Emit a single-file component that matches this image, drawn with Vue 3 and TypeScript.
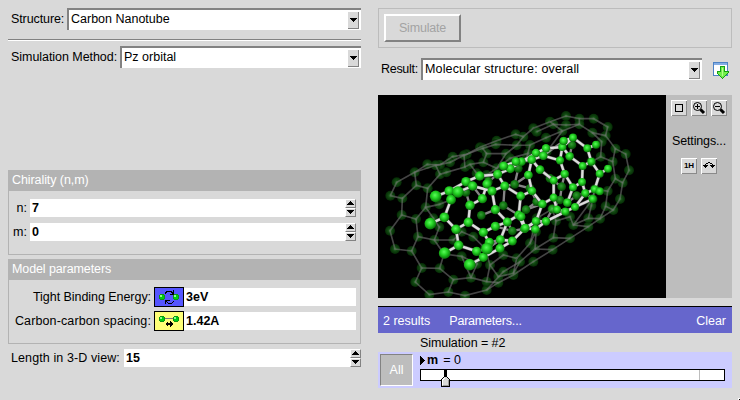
<script setup lang="ts">
import { ref } from 'vue'

type Point = [number, number]

const structure = ref('Carbon Nanotube')
const method = ref('Pz orbital')
const result = ref('Molecular structure: overall')
const chirality = ref([
  { label: 'n:', value: '7' },
  { label: 'm:', value: '0' },
])

// Each chain lists the atoms joined by consecutive bonds.
const outerChains = [
  '61,332 80,292 134,262 172,238 210,240 248,215 290,208 330,187 380,167 437,148 460,155 490,130 540,110 588,93 628,101 671,101 713,126 707,152 736,191 767,207 777,256 758,293 750,342 730,375 690,401 655,425 600,460 548,494 490,530 430,570 385,593 350,615 285,632 235,621 178,629 136,591 155,549 125,498 75,492 60,437 95,390 97,340 61,332',
  '97,340 139,301 134,262 197,241 240,232 282,211 338,190 377,178 440,181 460,155',
  '139,301 173,310 210,268 229,262 285,246 300,238 340,232 350,206 408,206 440,181 480,180 528,158 577,138 628,118 667,143 707,152',
  '173,310 167,367 138,402 95,390', '138,402 144,455 125,498',
  '144,455 193,465 222,507 209,550 155,549', '209,550 250,584 235,621',
  '193,465 208,426 190,400 167,367 208,358 243,344',
  '222,507 275,514 303,578 250,584', '275,514 321,537 303,578 350,590 385,593',
  '193,465 250,465 275,440 310,455 345,490 360,540 350,590',
  '360,540 400,510 440,520 430,565 385,575 360,540',
  '440,520 480,475 498,440 495,492 450,530 430,565',
  '495,492 550,458 558,408 600,395 610,420 655,400 664,362 674,313 713,318 736,281 758,293',
  '713,318 707,364 730,375', '707,364 690,401 655,400', '736,281 728,230 692,215 695,170 667,143',
  '728,230 736,191', '628,118 628,101', '577,138 540,110', '500,140 550,118 588,120 628,118',
  '350,206 338,190', '285,246 282,211', '210,268 197,241', '340,232 380,250 408,206',
  '480,180 470,220 530,200 577,138', '475,205 420,220 380,250',
  '300,238 320,265 350,270 380,250', '495,492 548,494', '550,458 600,460',
  '610,420 655,425', '450,530 400,560 350,615', '692,215 664,230', '674,313 668,342 610,420',
  '558,408 547,372 500,400 480,475',
]
// The far wall of the inner tube, seen through the near one.
const farChains = [
  '288,322 300,361', '308,303 337,341', '376,374 334,391', '404,303 400,362 446,390',
  '400,362 376,374', '351,297 355,290 383,268', '404,303 434,298 475,270', '434,298 480,310 500,350 468,374 453,395',
  '445,250 438,230', '445,250 434,298', '510,254 540,280 575,305 584,267', '575,305 570,345 547,372 528,409',
  '427,438 412,411', '376,424 427,438 464,431', '468,374 517,357', '581,168 520,212', '606,180 599,214',
  '646,325 620,332 592,353', '668,342 646,325', '358,472 391,464', '320,499 352,491 391,464',
]
const innerChains = [
  '197,334 238,318 288,290 329,273 383,268 421,251 454,230 498,204 528,190 577,186 609,158 652,190 678,179',
  '238,318 243,344 223,397 181,416', '223,397 258,433 266,481 224,504',
  '258,433 295,412 300,361 337,341 351,297', '295,412 340,442 376,424 412,411 446,390 452,333 404,303 366,318 376,374 412,411',
  '264,321 308,303 366,318', '308,303 288,290',
  '266,481 320,499 340,517 299,539', '340,517 390,490 427,468 464,431 446,390',
  '340,442 358,472 351,491', '391,464 427,468', '391,464 412,411', '383,268 404,303',
  '401,243 438,230 485,224 475,270 486,318 517,357 498,409 464,431',
  '452,333 486,318', '485,224 510,254 551,286 551,338 517,357',
  '551,286 584,267 570,226 520,212 485,224', '570,226 577,186 599,214 638,243 664,230 652,190',
  '584,267 609,307 636,291 638,243', '609,307 592,353',
  '551,338 561,374', '636,291 646,325 674,313 689,266 664,230', '689,266 714,251', '646,325 615,366 586,380 561,374',
  '528,409 498,409 466,429 453,395', '496,433 466,429', '496,433 528,409 586,380',
  '581,168 609,158', '674,313 689,319', '668,342 615,366', '421,251 401,243',
]

const parse = (chain: string): Point[] =>
  chain.split(' ').map((pair) => pair.split(',').map(Number) as Point)
const atomsOf = (chains: string[]): Point[] =>
  [...new Set(chains.flatMap((chain) => chain.split(' ')))].map((p) => parse(p)[0])

const outerAtoms = atomsOf(outerChains)
const farAtoms = atomsOf(farChains)
const innerAtoms = atomsOf(innerChains)
const terminals = new Set(['197,334', '181,416', '224,504', '264,321', '299,539', '351,491'])
const innerRadius = (p: Point): number =>
  terminals.has(p.join()) ? 17.5 : Math.max(12, 15 - (p[0] - 180) / 150)
</script>

<template>
  <main class="app">
    <section class="inputs">
      <div class="row">
        <label class="t-structure">Structure:</label>
        <div class="combo"><span class="t-cn">{{ structure }}</span><i class="drop"><svg width="7" height="4"><path d="M0 0h7v1H6v1H5v1H4v1H3V3H2V2H1V1H0z" /></svg></i></div>
      </div>
      <hr />
      <div class="row">
        <label class="t-method">Simulation Method:</label>
        <div class="combo"><span class="t-pz">{{ method }}</span><i class="drop"><svg width="7" height="4"><path d="M0 0h7v1H6v1H5v1H4v1H3V3H2V2H1V1H0z" /></svg></i></div>
      </div>

      <fieldset class="group chirality">
        <header><span class="t-chi">Chirality (n,m)</span></header>
        <div v-for="item in chirality" :key="item.label" class="field">
          <label>{{ item.label }}</label>
          <div class="entry">{{ item.value }}</div>
          <div class="spin">
            <i><svg width="7" height="4"><path d="M3 0h1v1h1v1h1v1h1v1H0V3h1V2h1V1h1z" /></svg></i>
            <i><svg width="7" height="4"><path d="M0 0h7v1H6v1H5v1H4v1H3V3H2V2H1V1H0z" /></svg></i>
          </div>
        </div>
      </fieldset>

      <fieldset class="group model">
        <header><span class="t-model">Model parameters</span></header>
        <div class="field">
          <label class="t-tight">Tight Binding Energy:</label>
          <svg class="thumb" width="30" height="20">
            <rect x=".5" y=".5" width="29" height="19" fill="#55f" stroke="#000" />
            <path d="M11 6.500l2-2h4l2 2M19.500 3v4h-4M11.500 17v-4h4M12 14l2 2h4l2-2" fill="none" stroke="#000" />
            <g class="ball"><circle cx="8" cy="10" r="3" /><circle cx="22" cy="10" r="3" /></g>
            <g fill="#8f8"><circle cx="7" cy="9" r="1" /><circle cx="21" cy="9" r="1" /></g>
          </svg>
          <div class="entry">3eV</div>
        </div>
        <div class="field">
          <label class="t-spacing">Carbon-carbon spacing:</label>
          <svg class="thumb" width="30" height="20">
            <rect x=".5" y=".5" width="29" height="19" fill="#ff7" stroke="#000" />
            <path d="M8 7.5h14" stroke="#777" />
            <path d="M11 13l3-3v2h2v-2l3 3-3 3v-2h-2v2z" />
            <g class="ball"><circle cx="8" cy="8" r="3" /><circle cx="22" cy="8" r="3" /></g>
            <g fill="#8f8"><circle cx="7" cy="7" r="1" /><circle cx="21" cy="7" r="1" /></g>
          </svg>
          <div class="entry">1.42A</div>
        </div>
      </fieldset>

      <div class="field length">
        <label class="t-length">Length in 3-D view:</label>
        <div class="entry">15</div>
        <div class="spin">
          <i><svg width="7" height="4"><path d="M3 0h1v1h1v1h1v1h1v1H0V3h1V2h1V1h1z" /></svg></i>
          <i><svg width="7" height="4"><path d="M0 0h7v1H6v1H5v1H4v1H3V3H2V2H1V1H0z" /></svg></i>
        </div>
      </div>
    </section>

    <section class="outputs">
      <div class="simulate"><button class="raised" disabled>Simulate</button></div>
      <div class="row result">
        <label class="t-result">Result:</label>
        <div class="combo"><span class="t-mol">{{ result }}</span><i class="drop"><svg width="7" height="4"><path d="M0 0h7v1H6v1H5v1H4v1H3V3H2V2H1V1H0z" /></svg></i></div>
        <svg class="download" width="17" height="17">
          <rect x=".5" y=".5" width="14" height="13" rx="1" fill="#fff" stroke="#4d82c4" />
          <path d="M1 1h13v2H1z" fill="#84aee5" />
          <path d="M7.5 4.5h4v5h4v1l-6 6-5-5v-2h3z" fill="#72ef4b" stroke="#16a016" />
          <path d="M9.5 6v8" stroke="#b6ff8e" />
        </svg>
      </div>

      <div class="viewer">
        <svg class="scene" width="288" height="203" viewBox="24 30 864 609">
          <defs>
            <radialGradient id="bright" cx="44%" cy="40%" r="60%">
              <stop offset="0" stop-color="#5cfa5c" /><stop offset=".45" stop-color="#24d424" /><stop offset="1" stop-color="#087008" />
            </radialGradient>
            <radialGradient id="dim">
              <stop offset="0" stop-color="#3c8c3c" /><stop offset=".4" stop-color="#165816" /><stop offset="1" stop-color="#063206" />
            </radialGradient>
          </defs>
          <rect x="24" y="30" width="864" height="609" />
          <g opacity=".85">
            <circle v-for="(p, i) in outerAtoms" :key="i" :cx="p[0]" :cy="p[1]" r="15" fill="url(#dim)" />
            <polyline v-for="(c, i) in outerChains" :key="'b' + i" :points="c" class="outer-bond" />
          </g>
          <g opacity=".6">
            <polyline v-for="(c, i) in farChains" :key="'f' + i" :points="c" class="inner-bond" />
            <circle v-for="(p, i) in farAtoms" :key="'g' + i" :cx="p[0]" :cy="p[1]" r="13" fill="url(#bright)" />
          </g>
          <polyline v-for="(c, i) in innerChains" :key="'e' + i" :points="c" class="bond-edge" />
          <polyline v-for="(c, i) in innerChains" :key="'i' + i" :points="c" class="inner-bond" />
          <circle v-for="(p, i) in innerAtoms" :key="'a' + i" :cx="p[0]" :cy="p[1]" :r="innerRadius(p)" fill="url(#bright)" />
        </svg>
        <aside class="tools">
          <div class="tool-row">
            <button class="tool"><svg width="16" height="16"><path d="M4.500 4.500h7v7h-7z" class="line" /></svg></button>
            <button class="tool"><svg width="16" height="16" class="smooth"><circle cx="6.5" cy="6.5" r="4" class="line" /><path d="M4 6.500h5M6.500 4v5" class="line" /><path d="M9.500 9.500l3.500 3.500" class="handle" /></svg></button>
            <button class="tool"><svg width="16" height="16" class="smooth"><circle cx="6.5" cy="6.5" r="4" class="line" /><path d="M4 6.500h5" class="line" /><path d="M9.500 9.500l3.500 3.500" class="handle" /></svg></button>
          </div>
          <span class="settings">Settings...</span>
          <div class="tool-row">
            <button class="tool"><span class="one-h">1H</span></button>
            <button class="tool"><svg width="16" height="16"><path d="M4 6h1v1H4zM5 5h2v1H5zM9 5h2v1H9zM11 6h1v1h-1zM7 4h2v1H7zM2 7h5v1H6v1H5v1H4V9H3V8H2zM9 7h5v1h-1v1h-1v1h-1V9h-1V8H9z" /></svg></button>
          </div>
        </aside>
      </div>

      <nav class="bar">
        <span class="t-results">2 results</span><span class="t-params">Parameters...</span><span class="t-clear">Clear</span>
      </nav>
      <p class="sim-name"><span class="t-sim">Simulation = #2</span></p>
      <div class="sequence">
        <button class="all">All</button>
        <div class="control">
          <div class="param"><svg width="5" height="9"><path d="M0 0h1v1h1v1h1v1h1v1h1v1H4v1H3v1H2v1H1v1H0z" /></svg><b>m</b><span>= 0</span></div>
          <div class="slider">
            <i class="tick"></i>
            <svg class="knob" width="9" height="18">
              <path d="M3 0h3v7H3z" />
              <path d="M.5 16.500v-7l3-3h2l3 3v7z" fill="#d9d9d9" stroke="#000" /><path d="M1.500 15V10l2-2" stroke="#fff" fill="none" /><path d="M7.500 10v5.500h-6" stroke="#999" fill="none" />
            </svg>
          </div>
        </div>
      </div>
    </section>
    <i class="grip"></i>
  </main>
</template>

<style>
body { margin: 0; background: #d9d9d9; overflow: hidden; }
</style>

<style scoped>
* { box-sizing: border-box; }
.app { position: relative; width: 740px; height: 400px; display: grid; grid-template-columns: 353px 354px; column-gap: 17px; padding: 8px; align-items: start; background: #d9d9d9; color: #000; font: 12.5px/16px "Liberation Sans", Arial, sans-serif; white-space: nowrap; }
svg { display: block; shape-rendering: crispEdges; flex: none; }
.scene, .smooth { shape-rendering: auto; }
button { font: inherit; padding: 0; border-radius: 0; }
i { display: block; font-style: normal; }
.inputs, .outputs { display: flex; flex-direction: column; min-width: 0; }
.row { display: flex; align-items: center; height: 22px; padding-left: 3px; }
.row label { flex: none; }
.t-structure { width: 56px; letter-spacing: -.1px; }
.t-method { width: 109px; letter-spacing: -.05px; }
.t-result { width: 40px; letter-spacing: -.3px; }
.t-mol { letter-spacing: .15px; }
.t-chi { letter-spacing: -.08px; }
.t-model { letter-spacing: -.1px; }
.combo { flex: 1; display: flex; align-items: center; justify-content: space-between; height: 22px; background: #fff; border: solid #828282; border-width: 2px 0 0 2px; padding: 0 2px; }
.combo span { margin-top: -2px; }
.drop { width: 11px; height: 17px; background: #d9d9d9; border-right: 1px solid #828282; border-bottom: 1px solid #828282; padding: 6px 0 0 2px; }
hr { width: 100%; height: 2px; margin: 9px 0 5px; border: 0; border-top: 1px solid #828282; background: #fff; }
.group { margin: 0; padding: 0 4px 0 0; border: 1px solid #b3b3b3; height: 85px; min-width: 0; }
.chirality { margin-top: 102px; }
.model { margin-top: 4px; }
.group header { height: 20px; margin: 0 -4px 0 0; background: #b3b3b3; color: #fff; padding: 1px 0 0 3px; }
.field { display: flex; align-items: center; height: 18px; }
.group .field { margin-top: 6px; }
.group header + .field { margin-top: 8px; }
.field label { text-align: right; margin-top: -1px; flex: none; }
.chirality label { width: 21px; padding-right: 3px; }
.model label { width: 145px; padding-right: 3px; }
.t-tight { letter-spacing: -.05px; }
.t-spacing { letter-spacing: .12px; }
.entry { flex: 1; height: 18px; background: #fff; font-weight: 700; padding: 1px 0 0 2px; }
.ball { fill: #0c1; stroke: #175b10; stroke-width: .5; }
.spin { width: 11px; height: 18px; display: grid; grid-template-rows: 9px 9px; }
.spin i { background: #d9d9d9; border: 1px solid #828282; border-top-color: #fff; border-left-color: #fff; padding: 1px 0 0 1px; }
.length { margin: 5px 0 0 3px; }
.length label { width: 113px; text-align: left; letter-spacing: .1px; }
.simulate { border: 1px solid #bcbcbc; height: 40px; padding: 5px; }
.raised { display: block; width: 77px; height: 28px; border: 2px solid #828282; border-top-color: #fff; border-left-color: #fff; background: #d9d9d9; color: #a3a3a3; letter-spacing: -.2px; }
.result { margin-top: 10px; }
.download { margin: 2px 2px 0 11px; }
.viewer { display: flex; height: 203px; margin-top: 15px; }
.tools { width: 66px; height: 203px; background: #bdbdbd; display: flex; flex-direction: column; align-items: center; padding-top: 5px; }
.tool-row { display: flex; gap: 4px; }
.tool { width: 16px; height: 16px; border: 0; background: #d9d9d9; box-shadow: inset 1px 1px #fff, inset -1px -1px #8a8a8a; }
.one-h { display: block; font: 700 8px/16px "Liberation Sans", Arial, sans-serif; text-align: center; }
.line { fill: none; stroke: #000; stroke-width: 1; }
.handle { fill: none; stroke: #000; stroke-width: 3; }
.settings { margin: 17px 0 9px; letter-spacing: -.15px; }
.outer-bond { fill: none; stroke: #858585; stroke-opacity: .6; stroke-width: 5; }
.bond-edge { fill: none; stroke: #555; stroke-width: 10; }
.inner-bond { fill: none; stroke: #dedede; stroke-width: 7; }
.bar { display: flex; align-items: center; height: 27px; margin-top: 8px; padding: 2px 6px 0 5px; border-top: 1px solid #000; background: #66c; color: #fff; }
.t-params { margin-left: 19px; letter-spacing: -.2px; }
.t-clear { margin-left: auto; }
.sim-name { height: 19px; margin: 0; padding: 2px 0 0 42px; letter-spacing: -.08px; }
.sequence { display: flex; height: 36px; padding: 2px 7px 0 2px; background: #ccf; }
.all { width: 33px; height: 32px; border: 1px solid #fff; border-top-color: #828282; border-left-color: #828282; background: #bdbdbd; color: #fff; }
.control { margin-left: 7px; flex: 1; }
.param { display: flex; align-items: center; gap: 2px; height: 12px; margin-bottom: 3px; }
.param span { margin-left: 3px; }
.slider { position: relative; height: 12px; border: 1px solid #000; background: #fff; }
.tick { position: absolute; left: 278px; top: 0; width: 1px; height: 10px; background: #bdbdbd; }
.knob { position: absolute; left: 20px; top: 0; }
.grip { position: absolute; right: 0; bottom: 0; width: 2px; height: 2px; border: solid #fff; border-width: 1px 0 0 1px; background: #000; }
</style>
